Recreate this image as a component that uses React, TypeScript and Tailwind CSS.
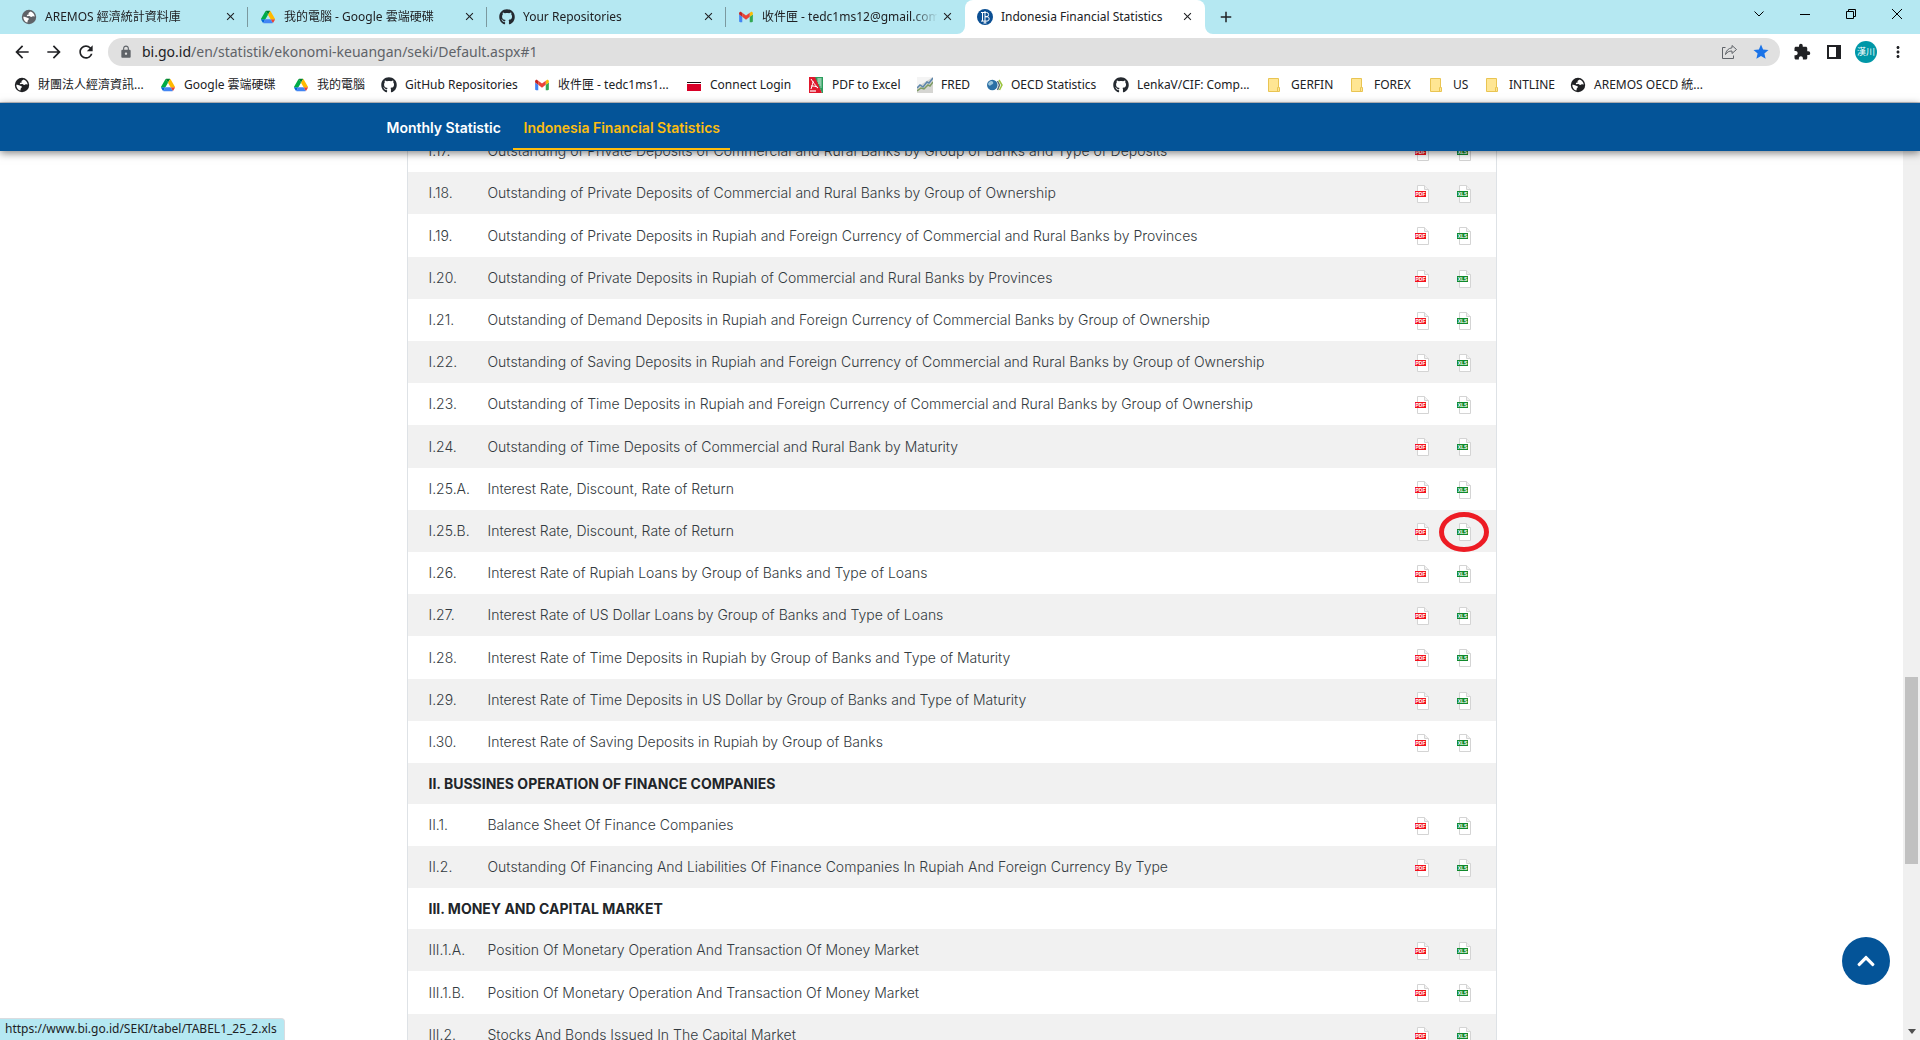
import React from "react";
import { FaGithub, FaChevronUp } from "react-icons/fa";
import { MdArrowBack, MdArrowForward, MdClose, MdExtension, MdLock, MdMoreVert, MdRefresh, MdStar, MdAdd } from "react-icons/md";

function Globe({ color }: { color: string }) {
  return (
    <svg width="16" height="16" viewBox="0 0 16 16" aria-hidden="true">
      <circle cx="8" cy="8" r="7.2" fill={color} />
      <path d="M2.3 7.7c1 0 2.6.1 3.4.9.6.6 1.9.3 2.2 1.2.2.9-1.100 1-1.200 2-.1.700-.1 1.300-.3 1.800C4 13 2.200 10.700 2.300 7.700Z" fill="white" />
      <path d="M9.500 2.500c-.4.900-1.900.8-2 1.700-.1.600.5.900 0 1.400-.6.500-1.500.100-1.700.8 0 .7 1 .8 1.800.7 1-.1 1.500.6 2.300.8 1.200.2 1.500-.7 2.600-.6.500.1.800.3 1.200.3-.1-2.300-1.800-4.400-4.200-5.100Z" fill="white" />
    </svg>
  );
}

function Drive() {
  return (
    <svg className="mx-px" width="14" height="14" viewBox="0 0 87.3 78" aria-hidden="true">
      <path d="m6.600 66.850 3.850 6.650c.8 1.400 1.950 2.500 3.300 3.300l13.750-23.800h-27.500c0 1.550.4 3.100 1.200 4.500z" fill="#0066da" />
      <path d="m43.650 25-13.750-23.800c-1.350.8-2.500 1.900-3.300 3.300l-25.400 44a9.060 9.060 0 0 0-1.200 4.500h27.500z" fill="#00ac47" />
      <path d="m73.550 76.800c1.350-.8 2.500-1.900 3.300-3.300l1.600-2.750 7.650-13.250c.8-1.400 1.200-2.950 1.200-4.500h-27.502l5.852 11.500z" fill="#ea4335" />
      <path d="m43.650 25 13.750-23.800c-1.350-.8-2.900-1.200-4.500-1.200h-18.500c-1.600 0-3.150.45-4.500 1.200z" fill="#00832d" />
      <path d="m59.800 53h-32.300l-13.750 23.800c1.350.8 2.900 1.200 4.500 1.200h50.800c1.600 0 3.150-.45 4.500-1.200z" fill="#4285f4" />
      <path d="m73.400 26.500-12.700-22c-.8-1.400-1.950-2.500-3.300-3.300l-13.750 23.800 16.150 28h27.450c0-1.550-.4-3.100-1.200-4.500z" fill="#ffba00" />
    </svg>
  );
}

function Gmail() {
  return (
    <svg className="mx-px" width="14" height="14" viewBox="51 43 90 90" aria-hidden="true">
      <path fill="#4285f4" d="M58 121h14V87L52 72v43c0 3.320 2.690 6 6 6" />
      <path fill="#34a853" d="M120 121h14c3.320 0 6-2.690 6-6V72l-20 15" />
      <path fill="#fbbc04" d="M120 61v26l20-15v-8c0-7.420-8.470-11.650-14.400-7.200" />
      <path fill="#ea4335" d="M72 87V61l24 18 24-18v26L96 105" />
      <path fill="#c5221f" d="M52 64v8l20 15V61l-5.600-4.200C60.460 52.350 52 56.580 52 64" />
    </svg>
  );
}

function BankLogo() {
  return (
    <svg width="16" height="16" viewBox="0 0 16 16" aria-hidden="true">
      <circle cx="8" cy="8" r="8" fill="#0b4f93" />
      <g fill="none" stroke="white" strokeWidth="1">
        <path d="M4 3.500h5M5.500 3.500v8.500M8 2v12M6.500 14h3" />
        <path d="M8 3.500h1.500a2.100 2.100 0 0 1 0 4.200H8M8 7.700h2a2.200 2.200 0 0 1 0 4.400H4" />
      </g>
    </svg>
  );
}

function ConnectLogo() {
  return (
    <svg width="16" height="16" viewBox="0 0 16 16" aria-hidden="true">
      <path d="M1 5h14v1H1z" fill="#111" />
      <path d="M1 7h14v7H1z" fill="#d80027" />
    </svg>
  );
}

function PdfExcelLogo() {
  return (
    <svg width="16" height="16" viewBox="0 0 16 16" aria-hidden="true">
      <path d="M1 0h7l6 16H1z" fill="#e0182d" />
      <path d="M7 0h8v16h-1z" fill="#2a9d5c" />
      <path d="M3 2c2 3 4 6 7 9M3 12c1-3 2-6 2-8M3 9c3 0 5 0 7 2" fill="none" stroke="white" />
      <path d="M9 2h4M9 4h4M10 6h3M11 8h2M11 1v6M13 1v10" fill="none" stroke="white" strokeOpacity=".8" strokeWidth=".7" />
      <path d="M2 14h6" stroke="white" strokeWidth="1.500" strokeOpacity=".8" />
    </svg>
  );
}

function FredLogo() {
  return (
    <svg width="16" height="16" viewBox="0 0 16 16" aria-hidden="true">
      <path d="M0 0h16v16H0z" fill="#d5d5d2" />
      <path d="M0 0h16L0 10z" fill="#f4f4f4" />
      <path d="m0 11 3-3 3 2 4-5 2 1 4-5" fill="none" stroke="#5b86ad" strokeWidth="1.500" />
      <path d="m0 14 4-3 3 1 4-4 2 1 3-4" fill="none" stroke="#7d9b64" strokeWidth="1.500" />
    </svg>
  );
}

function OecdLogo() {
  return (
    <svg width="16" height="16" viewBox="0 0 16 16" aria-hidden="true">
      <circle cx="5.300" cy="8" r="5.300" fill="#2b70a5" />
      <path d="M1 7c1-3 4-4 5-2s-1 2-2 3-2 1-3-1z" fill="#9cc6dc" />
      <path d="M10.500 4l2 4-2 5" fill="none" stroke="#5f6f72" strokeWidth="1.500" />
      <path d="M12 3l3 5-2.500 5" fill="none" stroke="#9bc53d" strokeWidth="1.500" />
    </svg>
  );
}

function Folder() {
  return (
    <svg width="16" height="16" viewBox="0 0 16 16" aria-hidden="true">
      <path d="M1.500 1.500h10v9h1v4h-11z" fill="#ffe693" stroke="#e9c452" />
      <path d="M10.500 14.500v-4h1" fill="none" stroke="#e9c452" />
    </svg>
  );
}

const tabs = [
  { title: "AREMOS 經濟統計資料庫", icon: <Globe color="#5f6368" /> },
  { title: "我的電腦 - Google 雲端硬碟", icon: <Drive /> },
  { title: "Your Repositories", icon: <FaGithub size={16} color="#24292f" /> },
  { title: "收件匣 - tedc1ms12@gmail.com", icon: <Gmail /> },
];

const bookmarks = [
  { title: "財團法人經濟資訊...", icon: <Globe color="#202124" />, width: "w-[146px]" },
  { title: "Google 雲端硬碟", icon: <Drive />, width: "w-[133px]" },
  { title: "我的電腦", icon: <Drive />, width: "w-[88px]" },
  { title: "GitHub Repositories", icon: <FaGithub size={16} color="#24292f" />, width: "w-[153px]" },
  { title: "收件匣 - tedc1ms1...", icon: <Gmail />, width: "w-[152px]" },
  { title: "Connect Login", icon: <ConnectLogo />, width: "w-[122px]" },
  { title: "PDF to Excel", icon: <PdfExcelLogo />, width: "w-[109px]" },
  { title: "FRED", icon: <FredLogo />, width: "w-[70px]" },
  { title: "OECD Statistics", icon: <OecdLogo />, width: "w-[126px]" },
  { title: "LenkaV/CIF: Comp...", icon: <FaGithub size={16} color="#24292f" />, width: "w-[154px]" },
  { title: "GERFIN", icon: <Folder />, width: "w-[83px]" },
  { title: "FOREX", icon: <Folder />, width: "w-[79px]" },
  { title: "US", icon: <Folder />, width: "w-[56px]" },
  { title: "INTLINE", icon: <Folder />, width: "w-[85px]" },
  { title: "AREMOS OECD 統...", icon: <Globe color="#202124" />, width: "w-[160px]" },
];

type Row = [string, string];
type Section = { heading?: string; rows: Row[]; spaced?: boolean };

const sections: Section[] = [
  {
    spaced: true,
    rows: [
      ["I.17.", "Outstanding of Private Deposits of Commercial and Rural Banks by Group of Banks and Type of Deposits"],
      ["I.18.", "Outstanding of Private Deposits of Commercial and Rural Banks by Group of Ownership"],
      ["I.19.", "Outstanding of Private Deposits in Rupiah and Foreign Currency of Commercial and Rural Banks by Provinces"],
      ["I.20.", "Outstanding of Private Deposits in Rupiah of Commercial and Rural Banks by Provinces"],
      ["I.21.", "Outstanding of Demand Deposits in Rupiah and Foreign Currency of Commercial Banks by Group of Ownership"],
      ["I.22.", "Outstanding of Saving Deposits in Rupiah and Foreign Currency of Commercial and Rural Banks by Group of Ownership"],
      ["I.23.", "Outstanding of Time Deposits in Rupiah and Foreign Currency of Commercial and Rural Banks by Group of Ownership"],
      ["I.24.", "Outstanding of Time Deposits of Commercial and Rural Bank by Maturity"],
      ["I.25.A.", "Interest Rate, Discount, Rate of Return"],
      ["I.25.B.", "Interest Rate, Discount, Rate of Return"],
      ["I.26.", "Interest Rate of Rupiah Loans by Group of Banks and Type of Loans"],
      ["I.27.", "Interest Rate of US Dollar Loans by Group of Banks and Type of Loans"],
      ["I.28.", "Interest Rate of Time Deposits in Rupiah by Group of Banks and Type of Maturity"],
      ["I.29.", "Interest Rate of Time Deposits in US Dollar by Group of Banks and Type of Maturity"],
      ["I.30.", "Interest Rate of Saving Deposits in Rupiah by Group of Banks"],
    ],
  },
  {
    heading: "II. BUSSINES OPERATION OF FINANCE COMPANIES",
    rows: [
      ["II.1.", "Balance Sheet Of Finance Companies"],
      ["II.2.", "Outstanding Of Financing And Liabilities Of Finance Companies In Rupiah And Foreign Currency By Type"],
    ],
  },
  {
    heading: "III. MONEY AND CAPITAL MARKET",
    spaced: true,
    rows: [
      ["III.1.A.", "Position Of Monetary Operation And Transaction Of Money Market"],
      ["III.1.B.", "Position Of Monetary Operation And Transaction Of Money Market"],
      ["III.2.", "Stocks And Bonds Issued In The Capital Market"],
    ],
  },
];

const circled = "I.25.B.";

function FileLink({ kind, name }: { kind: "PDF" | "XLS"; name: string }) {
  const color = kind === "PDF" ? "#f3121d" : "#108a2c";
  return (
    <a href={"#" + kind + name} aria-label={kind + " " + name} className="mx-auto block w-[14px]">
      <svg width="14" height="18" viewBox="0 0 14 18" aria-hidden="true">
        <path d="M2.500.5h7l4 4v13h-11z" fill="white" stroke="#d4d4d4" />
        <path d="M9.500.5v4h4" fill="#f1f1f1" stroke="#d4d4d4" />
        <path d="M0 6h11v6H0z" fill={color} />
        <text x="5.500" y="10.700" textAnchor="middle" fontSize="5" fontWeight="700" fill="white" fontFamily="Liberation Sans, sans-serif">
          {kind}
        </text>
      </svg>
    </a>
  );
}

function StatRow({ row }: { row: Row }) {
  const [code, title] = row;
  return (
    <tr className="h-[42px]">
      <td className="w-[80px] pl-[21px]">{code}</td>
      <td className="whitespace-nowrap">{title}</td>
      <td className="w-[42px] pt-px">
        <FileLink kind="PDF" name={code} />
      </td>
      <td className="w-[42px] pt-px">
        <div className="relative">
          <FileLink kind="XLS" name={code} />
          {code === circled && (
            <svg className="pointer-events-none absolute left-1/2 top-1/2 -translate-x-1/2 -translate-y-1/2" width="50" height="40" viewBox="0 0 50 40" aria-hidden="true">
              <ellipse cx="25" cy="20" rx="22.500" ry="17.500" fill="none" stroke="#ed1c24" strokeWidth="5" />
            </svg>
          )}
        </div>
      </td>
      <td className="w-[11px]" />
    </tr>
  );
}

export default function App() {
  return (
    <div className="relative flex h-screen flex-col overflow-hidden bg-white font-['Noto_Sans','Noto_Sans_CJK_TC',sans-serif] text-xs text-[#202124]">
      <header className="shrink-0 border-b border-[#c8c8cc]">
        <div className="flex h-[34px] bg-[#b5e8f2] pl-[9px]">
          {tabs.map((tab, i) => (
            <div key={tab.title} className="flex h-full w-[239px] items-center pb-px pl-3 pr-[11px]">
              <span className="w-4 shrink-0">{tab.icon}</span>
              <span className="ml-2 min-w-0 flex-1 overflow-hidden whitespace-nowrap [mask-image:linear-gradient(to_right,black_150px,transparent_176px)]">{tab.title}</span>
              <button aria-label="Close tab" className="ml-1 shrink-0">
                <MdClose size={13} />
              </button>
              {i < 3 && <span className="ml-[10px] -mr-[11px] h-5 w-px bg-[#7b999f]" />}
            </div>
          ))}
          <div className="relative flex w-[240px] items-center rounded-t-lg bg-white pl-3 pr-[11px] pb-px">
            <svg className="absolute -left-2 bottom-0" width="8" height="8" aria-hidden="true">
              <path d="M8 0v8H0a8 8 0 0 0 8-8z" fill="white" />
            </svg>
            <svg className="absolute -right-2 bottom-0" width="8" height="8" aria-hidden="true">
              <path d="M0 0v8h8a8 8 0 0 1-8-8z" fill="white" />
            </svg>
            <BankLogo />
            <span className="ml-2 flex-1 whitespace-nowrap">Indonesia Financial Statistics</span>
            <button aria-label="Close tab">
              <MdClose size={13} />
            </button>
          </div>
          <button aria-label="New tab" className="ml-3">
            <MdAdd size={18} />
          </button>
          <div className="ml-auto flex h-7">
            <button aria-label="Search tabs" className="flex w-[46px] items-center justify-center">
              <svg width="10" height="6" viewBox="0 0 10 6"><path d="m.5.5 4.500 4.500L9.500.5" fill="none" stroke="black" /></svg>
            </button>
            <button aria-label="Minimize" className="flex w-[46px] items-center justify-center">
              <svg width="10" height="10" viewBox="0 0 10 10"><path d="M0 5.500h10" stroke="black" /></svg>
            </button>
            <button aria-label="Restore" className="flex w-[46px] items-center justify-center">
              <svg width="10" height="10" viewBox="0 0 10 10"><path d="M.5 2.500h7v7h-7zM2.500 2.500v-2h7v7h-2" fill="none" stroke="black" /></svg>
            </button>
            <button aria-label="Close" className="flex w-[46px] items-center justify-center">
              <svg width="10" height="10" viewBox="0 0 10 10"><path d="m0 0 10 10M10 0 0 10" stroke="black" /></svg>
            </button>
          </div>
        </div>
        <div className="flex h-9 items-center pl-3">
          <button aria-label="Back" className="w-8"><MdArrowBack size={20} /></button>
          <button aria-label="Forward" className="w-8"><MdArrowForward size={20} /></button>
          <button aria-label="Reload" className="w-8"><MdRefresh size={20} /></button>
          <div className="flex h-7 flex-1 items-center rounded-full bg-[#e0e0e0] pl-[11px] pr-[10px] text-sm">
            <MdLock size={14} color="#5f6368" />
            <span className="ml-[9px] flex-1 text-[#5f6368]">
              <span className="text-[#202124]">bi.go.id</span>/en/statistik/ekonomi-keuangan/seki/Default.aspx#1
            </span>
            <button aria-label="Share">
              <svg width="16" height="16" viewBox="0 0 16 16"><path d="M3.500 3.500h-3v11h11v-3M10 1.500l4.500 4-4.500 4v-2.500c-3 0-5 1-6.500 3.500.5-4 3-6.300 6.500-6.700z" fill="none" stroke="#5f6368" /></svg>
            </button>
            <button aria-label="Bookmarked" className="ml-[14px]"><MdStar size={18} color="#1a73e8" /></button>
          </div>
          <button aria-label="Extensions" className="ml-[13px]"><MdExtension size={18} /></button>
          <button aria-label="Side panel" className="ml-4">
            <svg width="14" height="14" viewBox="0 0 14 14"><path d="M0 0h14v14H0zM2 2v10h7V2z" fill="#202124" fillRule="evenodd" /></svg>
          </button>
          <button aria-label="Profile" className="ml-[14px] size-[22px] rounded-full bg-[#0097a7] text-[9px] leading-[22px] text-white">漢川</button>
          <button aria-label="Menu" className="ml-3 mr-[13px]"><MdMoreVert size={18} /></button>
        </div>
        <nav aria-label="Bookmarks" className="flex h-8 items-center overflow-hidden pb-[3px] pl-[14px]">
          {bookmarks.map((b) => (
            <a key={b.title} href="#bookmark" className={"flex shrink-0 items-center gap-2 whitespace-nowrap " + b.width}>
              <span className="w-4 shrink-0">{b.icon}</span>
              {b.title}
            </a>
          ))}
        </nav>
      </header>
      <div className="relative z-10 h-12 shrink-0 bg-[#045498] pr-[17px] shadow-[0_2px_8px_rgba(0,0,0,0.5)]">
        <nav className="mx-auto flex h-full max-w-[1152px] font-[Inter,sans-serif] text-sm font-semibold text-white">
          <a href="#monthly" className="flex w-[137px] items-center whitespace-nowrap px-[11px] pt-0.5">Monthly Statistic</a>
          <a href="#ifs" className="mb-px flex w-[217px] items-center whitespace-nowrap border-b-2 border-[#fcbd10] px-[11px] pt-[5px] text-[#fcbd10]">Indonesia Financial Statistics</a>
        </nav>
      </div>
      <div className="flex min-h-0 flex-1">
        <main className="min-w-0 flex-1 overflow-hidden">
          <table className="mx-auto -mt-[21px] w-full max-w-[1090px] border-separate border-spacing-0 border-x border-[#dee2e6] font-[Inter,sans-serif] text-sm font-light text-[#333a40]">
            {sections.map((s, i) => (
              <tbody
                key={i}
                className={
                  (i === 1 ? "[&>tr:nth-child(odd)]:bg-[#f1f1f1]" : "[&>tr:nth-child(even)]:bg-[#f1f1f1]") +
                  (s.spaced ? " [&>tr:nth-child(5n+3)]:h-[43px]" : "")
                }
              >
                {s.heading && (
                  <tr className="h-[41px]">
                    <th colSpan={5} scope="colgroup" className="pl-[21px] text-left font-bold text-[#212529]">{s.heading}</th>
                  </tr>
                )}
                {s.rows.map((r) => (
                  <StatRow key={r[0]} row={r} />
                ))}
              </tbody>
            ))}
          </table>
        </main>
        <div className="flex w-[17px] shrink-0 flex-col items-center bg-[#f0f0f0]" aria-hidden="true">
          <div className="flex-[526]" />
          <div className="w-[13px] flex-[187] bg-[#c1c1c1]" />
          <div className="flex-[165]" />
          <svg className="mb-[6px]" width="8" height="5" viewBox="0 0 8 5"><path d="M0 0h8L4 5z" fill="#505050" /></svg>
        </div>
      </div>
      <button aria-label="Back to top" className="absolute bottom-[55px] right-[30px] flex size-12 items-center justify-center rounded-full bg-[#045498] text-white">
        <FaChevronUp size={20} />
      </button>
      <div className="absolute bottom-0 left-0 h-[22px] rounded-tr border-r border-t border-[#dadce0] bg-[#b5e8f2] pl-[5px] pr-[7px] leading-5">
        https://www.bi.go.id/SEKI/tabel/TABEL1_25_2.xls
      </div>
    </div>
  );
}
